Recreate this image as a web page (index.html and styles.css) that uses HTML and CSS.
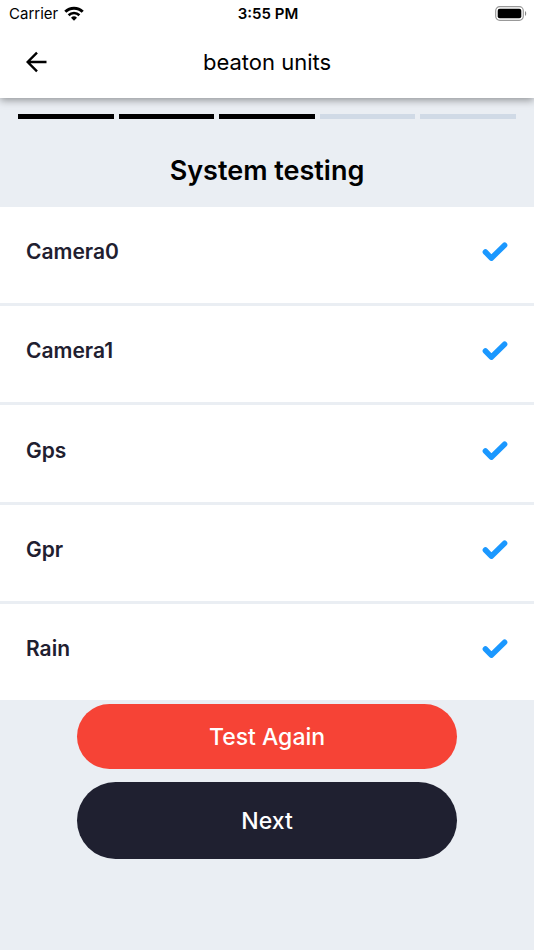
FILE: index.html
```html
<!DOCTYPE html>
<html lang="en">
<head>
    <meta charset="UTF-8">
    <meta name="viewport" content="width=device-width, initial-scale=1.0">
    <title>beaton units</title>
    <link rel="stylesheet" href="styles.css">
</head>
<body>
    <header class="top">
        <div class="status-bar">
            <div class="carrier">
                <span>Carrier</span>
                <svg class="wifi" viewBox="0 0 20 15" aria-hidden="true">
                    <path d="M1.300 5.700a12.400 12.400 0 0 1 17.400 0" fill="none" stroke="#000" stroke-width="3"/>
                    <path d="M4.600 9.200a7.700 7.700 0 0 1 10.800 0" fill="none" stroke="#000" stroke-width="2.600"/>
                    <path d="M10 14.800L7 11.800a4.300 4.300 0 0 1 6 0z"/>
                </svg>
            </div>
            <span class="time">3:55 PM</span>
            <svg class="battery" viewBox="0 0 32 15" aria-hidden="true">
                <rect x="0.700" y="0.700" width="27.600" height="13.600" rx="4" fill="none" stroke="#999" stroke-width="1.200"/>
                <rect x="2.700" y="2.700" width="23.600" height="9.600" rx="2"/>
                <path d="M30 5v5c1.600-.8 1.600-4.200 0-5z" fill="#888"/>
            </svg>
        </div>
        <div class="app-bar">
            <button class="back" type="button" aria-label="Back">
                <svg viewBox="0 0 24 24" aria-hidden="true">
                    <path d="M22.500 12H4M13 2.700L3.700 12l9.300 9.300" fill="none" stroke="#000" stroke-width="2.400"/>
                </svg>
            </button>
            <h1>beaton units</h1>
        </div>
    </header>

    <main class="content">
        <div class="steps" role="progressbar" aria-label="Setup progress" aria-valuemin="0" aria-valuemax="5" aria-valuenow="3">
            <span class="step done"></span>
            <span class="step done"></span>
            <span class="step done"></span>
            <span class="step"></span>
            <span class="step"></span>
        </div>
        <h2>System testing</h2>

        <svg class="symbols" aria-hidden="true">
            <symbol id="check" viewBox="0 0 26 20">
                <path d="M3.400 10l5.900 6.200L22.600 3.200" fill="none" stroke="#1b98ff" stroke-width="5.500" stroke-linecap="round" stroke-linejoin="round"/>
            </symbol>
        </svg>
        <ul class="tests">
            <li><span>Camera0</span><svg class="check" role="img" aria-label="Passed"><use href="#check"/></svg></li>
            <li><span>Camera1</span><svg class="check" role="img" aria-label="Passed"><use href="#check"/></svg></li>
            <li><span>Gps</span><svg class="check" role="img" aria-label="Passed"><use href="#check"/></svg></li>
            <li><span>Gpr</span><svg class="check" role="img" aria-label="Passed"><use href="#check"/></svg></li>
            <li><span>Rain</span><svg class="check" role="img" aria-label="Passed"><use href="#check"/></svg></li>
        </ul>

        <div class="actions">
            <button class="btn again" type="button">Test Again</button>
            <button class="btn next" type="button">Next</button>
        </div>
    </main>
</body>
</html>
```

FILE: styles.css
```css
* {
    box-sizing: border-box;
}
body {
    display: flex;
    flex-direction: column;
    min-height: 100vh;
    margin: 0;
    background-color: #eaeef3;
    color: #000;
    font-family: Inter, Roboto, sans-serif;
}
h1, h2 {
    margin: 0;
    text-align: center;
}
button {
    border: 0;
    font-family: inherit;
    cursor: pointer;
}

/* header */
.top {
    background-color: #fff;
    box-shadow: 0 2px 8px rgba(0, 0, 0, 0.4);
}
.status-bar {
    display: grid;
    grid-template-columns: 1fr auto 1fr;
    align-items: center;
    height: 26px;
    padding: 0 7px 0 9px;
    font-size: 15px;
}
.carrier {
    display: flex;
    align-items: center;
    gap: 6px;
}
.wifi {
    width: 20px;
    height: 15px;
}
.time {
    font-weight: 600;
}
.battery {
    justify-self: end;
    width: 32px;
    height: 15px;
}
.app-bar {
    display: grid;
    grid-template-columns: 48px 1fr 48px;
    align-items: center;
    height: 72px;
    padding: 0 12px;
}
.back {
    display: flex;
    align-items: center;
    justify-content: center;
    height: 48px;
    padding: 0;
    background: none;
}
.back svg {
    width: 24px;
    height: 24px;
}
h1 {
    font-size: 22px;
    font-weight: 400;
}

.content {
    display: flex;
    flex: 1;
    flex-direction: column;
}
.steps {
    display: flex;
    gap: 5px;
    padding: 16px 18px 0;
}
.step {
    flex: 1;
    height: 5px;
    background-color: #d0dae6;
}
.step.done {
    background-color: #000;
}
h2 {
    padding: 36px 0 20px;
    font-size: 27px;
    font-weight: 600;
    line-height: 32px;
}
.symbols {
    display: none;
}

/* list of tested parts */
.tests {
    display: flex;
    flex: 1;
    flex-direction: column;
    gap: 3px;
    margin: 0;
    padding: 0;
    list-style: none;
}
.tests li {
    display: flex;
    flex: 1;
    align-items: center;
    justify-content: space-between;
    padding: 30px 26px 36px;
    background-color: #fff;
    color: #1f2030;
    font-size: 21px;
    font-weight: 600;
    line-height: 28px;
}
.check {
    width: 26px;
    height: 20px;
}

/* buttons */
.actions {
    display: flex;
    flex-direction: column;
    align-items: center;
    gap: 13px;
    padding: 4px 0 91px;
}
.btn {
    width: 71%;
    border-radius: 40px;
    color: #fff;
    font-size: 23px;
    font-weight: 500;
    line-height: 29px;
}
.again {
    padding: 19px 18px 17px;
    background-color: #f64336;
}
.next {
    padding: 25px 18px 23px;
    background-color: #1f2030;
}
```
